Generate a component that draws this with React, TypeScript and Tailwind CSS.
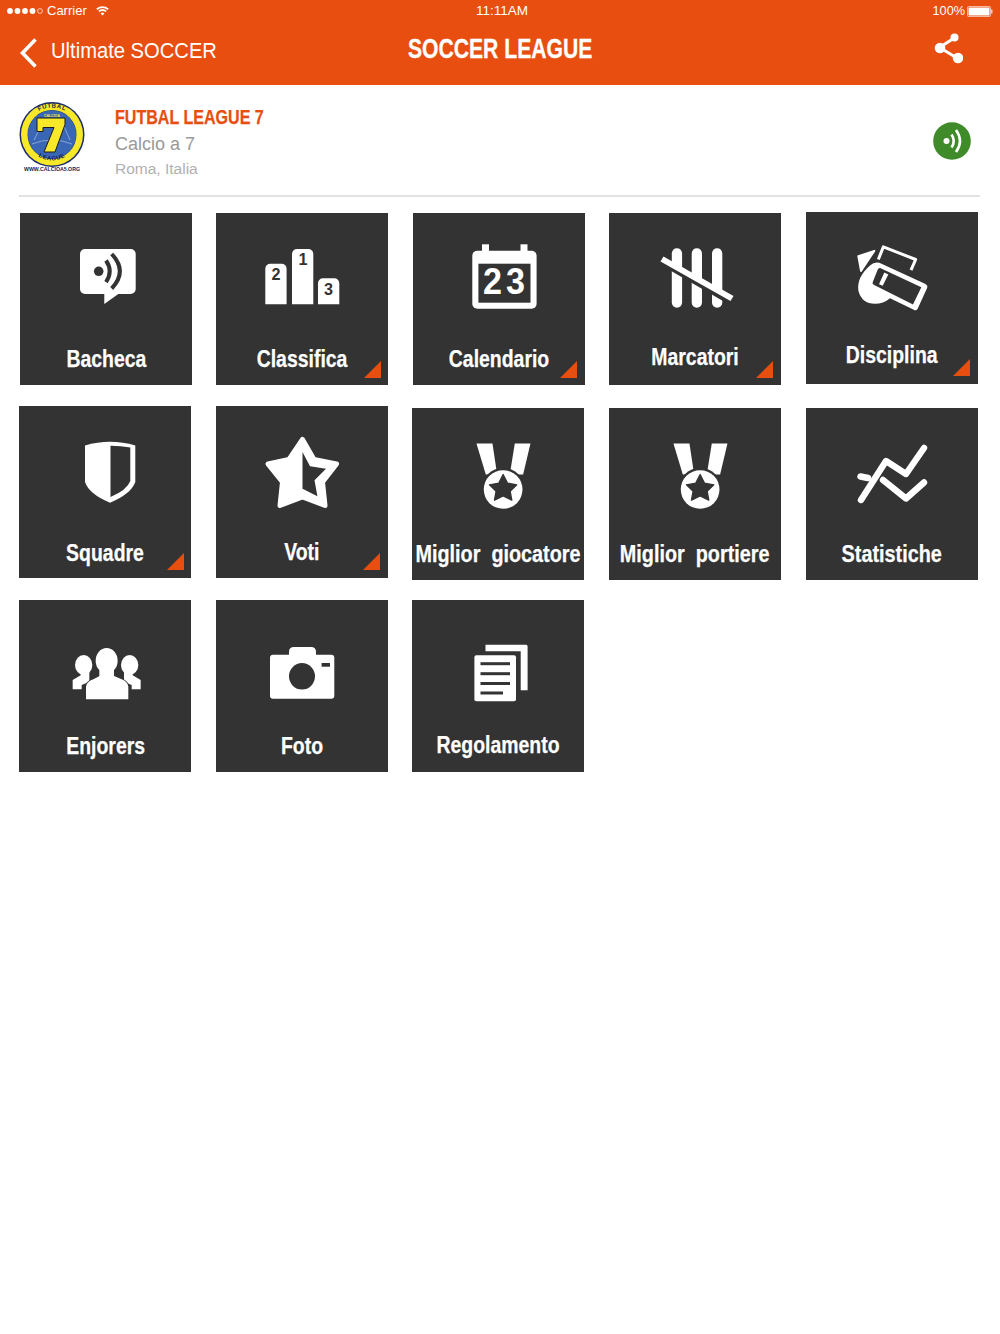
import React from "react";

const D = "#333333";

function Shell({ children }: { children: React.ReactNode }) {
  return (
    <svg className="block w-[172px] h-[130px] shrink-0" viewBox="0 0 172 130" fill="#fff">
      {children}
    </svg>
  );
}

function Bacheca() {
  return (
    <Shell>
      <path d="M65 36H110.7A5 5 0 0 1 115.7 41V76A5 5 0 0 1 110.7 81H98.3L84.3 91V81H65A5 5 0 0 1 60 76V41A5 5 0 0 1 65 36Z" />
      <circle cx="78.7" cy="58.3" r="4.8" fill={D} />
      <path d="M86 47.5Q93.5 58.3 86 69.2" fill="none" stroke={D} strokeWidth="4" />
      <path d="M91.7 41Q108 58.3 91.7 75.5" fill="none" stroke={D} strokeWidth="4" />
    </Shell>
  );
}

function Classifica() {
  const bar = (x: number, y: number) => `M${x} 91.3V${y + 5}A5 5 0 0 1 ${x + 5} ${y}H${x + 16.3}A5 5 0 0 1 ${x + 21.3} ${y + 5}V91.3Z`;
  return (
    <Shell>
      <path d={bar(49.3, 50.7)} />
      <path d={bar(76, 36)} />
      <path d={bar(102, 65.3)} />
      <text x="55.5" y="66.5" fill={D} fontSize="16" fontWeight="700" textLength="9" lengthAdjust="spacingAndGlyphs">2</text>
      <text x="82.5" y="52" fill={D} fontSize="16" fontWeight="700" textLength="9" lengthAdjust="spacingAndGlyphs">1</text>
      <text x="108" y="81.5" fill={D} fontSize="16" fontWeight="700" textLength="9" lengthAdjust="spacingAndGlyphs">3</text>
    </Shell>
  );
}

function Calendario() {
  return (
    <Shell>
      <rect x="69" y="31.3" width="7" height="10" />
      <rect x="107.5" y="31.3" width="7" height="10" />
      <rect x="59.3" y="37.7" width="64.3" height="58" rx="5" />
      <rect x="65.4" y="50.7" width="52.1" height="39" fill={D} />
      <text x="70" y="81" fontSize="36" fontWeight="700" textLength="19" lengthAdjust="spacingAndGlyphs">2</text>
      <text x="93" y="81" fontSize="36" fontWeight="700" textLength="19" lengthAdjust="spacingAndGlyphs">3</text>
    </Shell>
  );
}

function Marcatori() {
  return (
    <Shell>
      <rect x="62.8" y="35.3" width="10.3" height="59.4" rx="5.1" />
      <rect x="82.7" y="35.3" width="10.3" height="59.4" rx="5.1" />
      <rect x="103" y="35.3" width="10.3" height="59.4" rx="5.1" />
      <line x1="53" y1="50" x2="122" y2="90" stroke={D} strokeWidth="4.5" />
      <line x1="53" y1="46" x2="123" y2="85.5" stroke="#fff" strokeWidth="6" />
    </Shell>
  );
}

function Disciplina() {
  return (
    <Shell>
      <g transform="translate(39 23.5) scale(0.3333)">
        <path d="M40 62L88 46L48 106Z" stroke="#fff" strokeWidth="6" strokeLinejoin="round" />
        <path d="M100 72L115 34L212 72L198 104" fill="none" stroke="#fff" strokeWidth="9" strokeLinejoin="round" />
        <path d="M103 82L240 145Q250 150 246 158L218 220Q213 228 205 222L135 188Q115 205 90 205Q50 205 40 165Q35 125 75 90Q88 78 103 82Z" stroke={D} strokeWidth="4" paintOrder="stroke" />
        <path d="M107 98L229 155L204 207L86 148Q80 144 84 138L98 103Q101 96 107 98Z" fill={D} />
        <path d="M118 111L130 117L113 151L102 146Z" />
      </g>
    </Shell>
  );
}

function Squadre() {
  return (
    <Shell>
      <path d="M66 39.5Q91 32 116.3 39.5V76Q112 88 91 96.7Q70 88 66 76Z" />
      <path d="M91.5 39.8Q102 40 111.3 41.5V75Q108 84 91.5 91Z" fill={D} />
    </Shell>
  );
}

function Voti() {
  return (
    <Shell>
      <polygon points="86.5,33.5 98,53.5 120.5,58 106.5,76 109,99.5 86.5,91 64,99.5 66.5,76 52,58 73,53.5" stroke="#fff" strokeWidth="5" strokeLinejoin="round" />
      <polygon points="86.5,46 94,60.3 110,62.7 98.5,74.3 101.4,90.3 86.5,82.7" fill={D} />
    </Shell>
  );
}

function Medal() {
  return (
    <Shell>
      <g transform="translate(47.8 26.5) scale(0.3333)">
        <path d="M50 27H98L112 120H78Z" />
        <path d="M165 27H212L190 120H150Z" />
        <circle cx="130" cy="165" r="65" fill={D} />
        <circle cx="130" cy="165" r="58" />
        <polygon points="130,120 143,146 171,151 151,170 156,197 130,184 104,197 109,170 89,151 117,146" fill={D} stroke={D} strokeWidth="4" strokeLinejoin="round" />
      </g>
    </Shell>
  );
}

function Statistiche() {
  return (
    <Shell>
      <path d="M55 92L80 53L100 66L118 40" fill="none" stroke="#fff" strokeWidth="6.4" strokeLinecap="round" strokeLinejoin="round" />
      <path d="M54.5 68.5L62 70" fill="none" stroke="#fff" strokeWidth="6.4" strokeLinecap="round" />
      <path d="M77 72L100 90.5L118 74.5" fill="none" stroke="#fff" strokeWidth="6.4" strokeLinecap="round" strokeLinejoin="round" />
    </Shell>
  );
}

function Enjorers() {
  return (
    <Shell>
      <g transform="translate(41 40) scale(0.3333)">
        <ellipse cx="71" cy="75" rx="26" ry="30" />
        <path d="M38 148V120L62 106V92H88V125L65 135V148Z" />
        <ellipse cx="209" cy="75" rx="26" ry="30" />
        <path d="M242 148V120L218 106V92H192V125L215 135V148Z" />
        <path d="M78 178V140Q80 125 100 118L125 105V88H155V105L185 118Q203 125 205 140V178Z" stroke={D} strokeWidth="5" paintOrder="stroke" />
        <ellipse cx="140" cy="62" rx="33" ry="38" stroke={D} strokeWidth="5" paintOrder="stroke" />
        <path d="M118 88H162V112H118Z" />
      </g>
    </Shell>
  );
}

function Foto() {
  return (
    <Shell>
      <path d="M57 54.7H73V52Q73 47 78 47H95Q100 47 100 52V54.7H115.3Q118.3 54.7 118.3 57.7V95.7Q118.3 98.7 115.3 98.7H57Q54 98.7 54 95.7V57.7Q54 54.7 57 54.7Z" />
      <ellipse cx="86" cy="76.3" rx="13" ry="13.2" fill={D} />
      <rect x="105.6" y="63" width="8.4" height="3.7" fill={D} />
    </Shell>
  );
}

function Regolamento() {
  return (
    <Shell>
      <path d="M73.5 44.7H114Q115.6 44.7 115.6 46.3V90.3H108.7V51.3H73.5Z" />
      <rect x="62.4" y="55.3" width="41.6" height="46" rx="2" />
      <rect x="68.5" y="62.2" width="29.5" height="3" fill={D} />
      <rect x="68.5" y="72.2" width="29.5" height="3" fill={D} />
      <rect x="68.5" y="82" width="29.5" height="3" fill={D} />
      <rect x="68.5" y="91.5" width="22.5" height="3" fill={D} />
    </Shell>
  );
}

function Tile({
  icon,
  label,
  corner,
  tileClass,
  labelClass,
}: {
  icon: React.ReactNode;
  label: string;
  corner?: boolean;
  tileClass?: string;
  labelClass?: string;
}) {
  return (
    <div className={`relative flex flex-col items-center w-[172px] h-[172px] shrink-0 bg-[#333333] ${tileClass ?? ""}`}>
      {icon}
      <span className={`block w-max shrink-0 whitespace-pre text-white font-bold text-[24px] leading-[32px] [-webkit-text-stroke:0.25px_#fff] ${labelClass ?? "scale-x-[.81]"}`}>
        {label}
      </span>
      {corner && (
        <svg className="absolute right-[7.5px] bottom-[7.5px] w-[17px] h-[17px]" viewBox="0 0 17 17">
          <polygon points="17,0 17,17 0,17" fill="#e84e10" />
        </svg>
      )}
    </div>
  );
}

function Logo() {
  return (
    <svg className="block w-[68px] h-[76px] shrink-0" viewBox="0 0 68 76">
      <defs>
        <path id="topArc" d="M7 34.5A27 27 0 0 1 61 34.5" />
        <path id="botArc" d="M9.5 42A25.5 25.5 0 0 0 58.5 42" />
      </defs>
      <circle cx="34" cy="34.5" r="32.5" fill="#1c2a6b" />
      <circle cx="34" cy="34.5" r="31" fill="#f7e92a" />
      <circle cx="34" cy="34.5" r="24.5" fill="#27407f" />
      <circle cx="34" cy="34.5" r="24" fill="#3a67b5" />
      <path d="M16 40L24 24M52 40L45 24M14 44Q34 36 54 44" stroke="#a9bddf" strokeWidth="0.7" fill="none" />
      <text fontSize="6" fontWeight="700" fill="#14204f" letterSpacing="0.6">
        <textPath href="#topArc" startOffset="50%" textAnchor="middle">FUTBAL</textPath>
      </text>
      <text fontSize="6" fontWeight="700" fill="#14204f" letterSpacing="0.6">
        <textPath href="#botArc" startOffset="50%" textAnchor="middle">LEAGUE</textPath>
      </text>
      <path d="M19 18H47V24.5L37 52H26L36 27.5H25V31.5H19Z" fill="#f7e92a" stroke="#1a1a1a" strokeWidth="1" />
      <text x="34" y="16.5" fontSize="3.5" fontWeight="700" fill="#f7e92a" textAnchor="middle">CALCIOA</text>
      <text x="34" y="71" fontSize="5.4" fontWeight="700" fill="#14204f" textAnchor="middle" textLength="56" lengthAdjust="spacingAndGlyphs">WWW.CALCIOA5.ORG</text>
    </svg>
  );
}

export default function App() {
  return (
    <div className="w-[1000px] min-h-[1334px] bg-white font-['Liberation_Sans',Arial,sans-serif]">
      <header className="h-[85px] bg-[#e84e10] text-white flex flex-col">
        <div className="h-[22px] pl-[7px] pr-[7px] flex items-center text-[13px] leading-[22px]">
          <div className="flex-1 flex items-center">
            <svg className="w-[37px] h-[6px]" viewBox="0 0 37 6" fill="#fff">
              <circle cx="3" cy="3" r="2.9" />
              <circle cx="10.5" cy="3" r="2.9" />
              <circle cx="18" cy="3" r="2.9" />
              <circle cx="25.5" cy="3" r="2.9" />
              <circle cx="33" cy="3" r="2.4" fill="none" stroke="#fff" strokeWidth="0.7" />
            </svg>
            <span className="ml-[3px]">Carrier</span>
            <svg className="ml-[9px] w-[13px] h-[10px]" viewBox="0 0 13 10" fill="none" stroke="#fff" strokeWidth="1.8">
              <path d="M.8 3.2Q6.5-1 12.2 3.2" />
              <path d="M2.8 5.4Q6.5 2.5 10.2 5.4" />
              <path d="M6.5 9.5L4.6 7.4Q6.5 5.8 8.4 7.4Z" fill="#fff" stroke="none" />
            </svg>
          </div>
          <span className="ml-[4px] text-[13.5px]">11:11AM</span>
          <div className="flex-1 flex items-center justify-end">
            <span className="text-[12.7px]">100%</span>
            <svg className="ml-[2px] w-[26px] h-[11px]" viewBox="0 0 26 11">
              <rect x="0.5" y="0.5" width="23" height="10" rx="1" fill="none" stroke="#fff" strokeOpacity=".6" />
              <rect x="1.5" y="1.5" width="21" height="8" fill="#fff" />
              <rect x="24" y="3.5" width="1.5" height="4" fill="#fff" fillOpacity=".7" />
            </svg>
          </div>
        </div>
        <div className="relative flex-1 flex items-center pl-[20px] pr-[36px]">
          <svg className="w-[17px] h-[30px] mb-[1px]" viewBox="0 0 17 30" fill="none" stroke="#fff" strokeWidth="3.6">
            <path d="M15.5 1.5L2.5 15L15.5 28.5" />
          </svg>
          <span className="block ml-[14px] text-[22px] leading-[28px] scale-x-[.917] origin-left mb-[5px]">Ultimate SOCCER</span>
          <span className="absolute left-0 right-0 top-[8px] flex justify-center">
            <span className="block w-max font-bold text-[28px] leading-[38px] scale-x-[.755] [-webkit-text-stroke:0.3px_#fff]">SOCCER LEAGUE</span>
          </span>
          <svg className="ml-auto self-start mt-[10px] mr-[1px] w-[30px] h-[32px]" viewBox="0 0 30 32" fill="#fff">
            <path d="M6.5 15.5L22 5.5M6.5 15.5L24 26" stroke="#fff" strokeWidth="3" />
            <circle cx="21.5" cy="5.5" r="4" />
            <circle cx="7" cy="16" r="5.3" />
            <circle cx="25" cy="26" r="5.3" />
          </svg>
        </div>
      </header>

      <section className="h-[110px] pl-[18px] pr-[29px] pt-[15px] flex items-start">
        <Logo />
        <div className="ml-[29px] flex flex-col">
          <span className="block w-max font-bold text-[21px] leading-[26px] text-[#e84e10] scale-x-[.765] origin-left mt-[4px] [-webkit-text-stroke:0.25px_#e84e10]">FUTBAL LEAGUE 7</span>
          <span className="text-[18px] leading-[26px] text-[#999999] mt-[1px]">Calcio a 7</span>
          <span className="text-[15.5px] leading-[22px] text-[#b0b0b0] mt-[1px]">Roma, Italia</span>
        </div>
        <svg className="ml-auto mt-[22px] w-[38px] h-[38px]" viewBox="0 0 38 38">
          <circle cx="19" cy="19" r="18.8" fill="#3f8b2a" />
          <circle cx="13.5" cy="19" r="3" fill="#fff" />
          <path d="M18.5 12.5Q23 19 18.5 25.5" fill="none" stroke="#fff" strokeWidth="2.6" />
          <path d="M23 8Q31 19 23 30" fill="none" stroke="#fff" strokeWidth="2.6" />
        </svg>
      </section>

      <div className="ml-[19px] mr-[20px] h-[2px] bg-[#e2e2e2]" />

      <main className="pl-[19.4px]">
        <div className="flex items-start gap-x-[24.3px] mt-[16px]">
          <Tile icon={<Bacheca />} label="Bacheca" tileClass="ml-[.6px]" />
          <Tile icon={<Classifica />} label="Classifica" corner />
          <Tile icon={<Calendario />} label="Calendario" corner />
          <Tile icon={<Marcatori />} label="Marcatori" corner labelClass="scale-x-[.81] -mt-[2px]" />
          <Tile icon={<Disciplina />} label="Disciplina" corner tileClass="-mt-[1.5px] ml-[.6px]" labelClass="scale-x-[.81] -mt-[2.5px]" />
        </div>
        <div className="flex items-start gap-x-[24.5px] mt-[20.7px]">
          <Tile icon={<Squadre />} label="Squadre" corner labelClass="scale-x-[.81] mt-[1px]" />
          <Tile icon={<Voti />} label="Voti" corner labelClass="scale-x-[.81] mt-[.5px]" />
          <Tile icon={<Medal />} label="Miglior  giocatore" tileClass="mt-[2.8px]" labelClass="scale-x-[.825]" />
          <Tile icon={<Medal />} label="Miglior  portiere" tileClass="mt-[2.8px]" labelClass="scale-x-[.825]" />
          <Tile icon={<Statistiche />} label="Statistiche" tileClass="mt-[2.8px] ml-[.5px]" labelClass="scale-x-[.825]" />
        </div>
        <div className="flex items-start gap-x-[24.5px] mt-[19.5px]">
          <Tile icon={<Enjorers />} label="Enjorers" />
          <Tile icon={<Foto />} label="Foto" />
          <Tile icon={<Regolamento />} label="Regolamento" labelClass="scale-x-[.81] -mt-[.5px]" />
        </div>
      </main>
    </div>
  );
}
